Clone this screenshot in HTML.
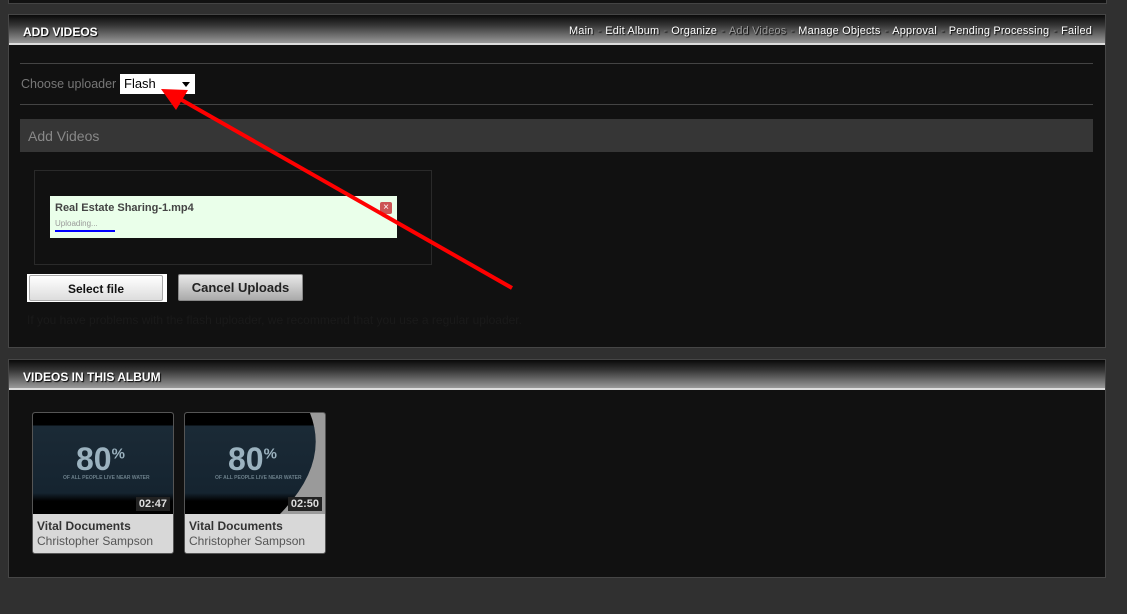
<!DOCTYPE html>
<html><head><style>
body{margin:0;width:1127px;height:614px;background:#303030;font-family:"Liberation Sans",Arial,sans-serif;position:relative;overflow:hidden}
.top{position:absolute;left:8px;top:0;width:1097px;height:3px;background:#111;border:1px solid #444;border-top:0}
.panel{position:absolute;left:8px;width:1096px;background:#111;border:1px solid #464646}
.hdr{height:28px;background:linear-gradient(#0a0a0a 0%,#333 35%,#999 100%);border-bottom:2px solid #ddd;position:relative}
.hdr .t{position:absolute;left:14px;top:10px;color:#fff;font-weight:bold;font-size:12px;text-shadow:1px 1px 1px #000}
.nav{position:absolute;right:13px;top:10px;color:#fff;font-size:11px;letter-spacing:0.15px;text-shadow:1px 1px 1px #000}
.nav span.s{color:#777;margin:0 4px}
.abs{position:absolute}
.card{position:absolute;top:412px;width:140px;height:140px;background:#d8d8d8;border:1px solid #555;border-radius:3px;overflow:hidden}
.thumb{height:101px;background:linear-gradient(#000 0,#000 12px,#1b2a36 13px,#152430 80px,#000 88px);position:relative}
.big{position:absolute;left:43px;top:28px;color:#9bb2bf;font-size:32px;font-weight:bold}
.big sup{font-size:15px}
.small{position:absolute;left:30px;top:62px;color:#6b7f8a;font-size:5px;font-weight:bold}
.dur{position:absolute;right:3px;bottom:3px;background:#222;color:#ddd;font-size:11px;font-weight:bold;padding:1px 3px}
.c1{position:absolute;left:4px;top:106px;font-size:12px;font-weight:bold;color:#333}
.c2{position:absolute;left:4px;top:121px;font-size:12px;color:#555}
</style></head><body>
<div class="top"></div>
<div class="panel" style="top:14px;height:332px">
 <div class="hdr"><div class="t">ADD VIDEOS</div>
 <div class="nav">Main<span class="s">-</span>Edit Album<span class="s">-</span>Organize<span class="s">-</span><span style="color:#999">Add Videos</span><span class="s">-</span>Manage Objects<span class="s">-</span>Approval<span class="s">-</span>Pending Processing<span class="s">-</span>Failed</div></div>
</div>
<div class="abs" style="left:20px;top:63px;width:1073px;height:1px;background:#444"></div>
<div class="abs" style="left:21px;top:77px;color:#777;font-size:12.5px">Choose uploader</div>
<div class="abs" style="left:120px;top:74px;width:75px;height:20px;background:#fff;font-size:13px;color:#000"><span style="position:absolute;left:4px;top:2px">Flash</span><span style="position:absolute;right:5px;top:8px;border:4px solid transparent;border-top:5px solid #000"></span></div>
<div class="abs" style="left:20px;top:104px;width:1073px;height:1px;background:#444"></div>
<div class="abs" style="left:20px;top:119px;width:1073px;height:33px;background:#363636"><span style="position:absolute;left:8px;top:9px;color:#888;font-size:14px">Add Videos</span></div>
<div class="abs" style="left:34px;top:170px;width:396px;height:93px;border:1px solid #2a2a2a"></div>
<div class="abs" style="left:50px;top:196px;width:347px;height:42px;background:#eaffea">
 <div style="position:absolute;left:5px;top:6px;font-size:11px;color:#444;font-weight:bold">Real Estate Sharing-1.mp4</div>
 <div style="position:absolute;left:5px;top:23px;font-size:8px;color:#999">Uploading...</div>
 <div style="position:absolute;left:5px;top:34px;width:60px;height:2px;background:#00f"></div>
 <div style="position:absolute;right:5px;top:6px;width:12px;height:12px;background:#c55;border-radius:2px;color:#fff;font-size:10px;text-align:center;line-height:12px">×</div>
</div>
<div class="abs" style="left:27px;top:274px;width:140px;height:28px;background:#fff"><div style="position:absolute;left:2px;top:1px;width:132px;height:24px;border:1px solid #aaa;border-radius:2px;background:linear-gradient(#fff,#ddd);text-align:center;line-height:26px;font-size:12px;font-weight:bold;color:#111">Select file</div></div>
<div class="abs" style="left:178px;top:274px;width:123px;height:25px;border:1px solid #888;border-radius:2px;background:linear-gradient(#e8e8e8,#aaa);text-align:center;line-height:26px;font-size:13px;font-weight:bold;color:#222">Cancel Uploads</div>
<div class="abs" style="left:27px;top:313px;font-size:12px;color:#1a1a1a">If you have problems with the flash uploader, we recommend that you use a regular uploader.</div>
<div class="panel" style="top:359px;height:217px">
 <div class="hdr"><div class="t">VIDEOS IN THIS ALBUM</div></div>
</div>
<div class="card" style="left:32px"><div class="thumb"><div class="big">80<sup>%</sup></div><div class="small">OF ALL PEOPLE LIVE NEAR WATER</div><div class="dur">02:47</div></div><div class="c1">Vital Documents</div><div class="c2">Christopher Sampson</div></div>
<div class="card" style="left:184px"><div class="thumb"><div class="big">80<sup>%</sup></div><div class="small">OF ALL PEOPLE LIVE NEAR WATER</div><svg style="position:absolute;right:0;top:0" width="45" height="101"><path d="M30 0 Q50 50 0 101 L45 101 L45 0Z" fill="#9a9a9a"/></svg><div class="dur">02:50</div></div><div class="c1">Vital Documents</div><div class="c2">Christopher Sampson</div></div>
<svg class="abs" style="left:0;top:0" width="1127" height="614"><line x1="512" y1="288" x2="180" y2="99" stroke="#f00" stroke-width="4"/><polygon points="161,89 188,90 176,110" fill="#f00"/></svg>
</body></html>
